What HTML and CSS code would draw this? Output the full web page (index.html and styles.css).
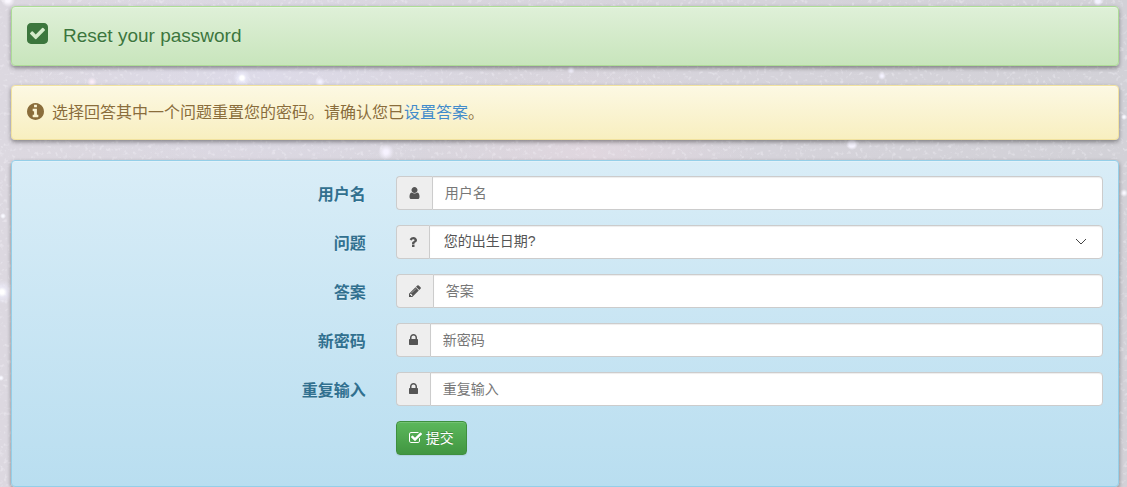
FILE: index.html
```html
<!DOCTYPE html>
<html lang="zh-CN">
<head>
    <meta charset="UTF-8">
    <meta name="viewport" content="width=device-width, initial-scale=1.0">
    <title>Reset your password</title>
    <link rel="stylesheet" href="styles.css">
</head>
<body>
    <div class="alert alert-success">
        <svg class="icon-title" viewBox="128 128 1536 1536" aria-hidden="true"><path d="M813 1299l614-614q19-19 19-45t-19-45l-102-102q-19-19-45-19t-45 19l-467 467-211-211q-19-19-45-19t-45 19l-102 102q-19 19-19 45t19 45l358 358q19 19 45 19t45-19zm851-883v960q0 119-84.5 203.5t-203.5 84.5h-960q-119 0-203.5-84.5t-84.5-203.5v-960q0-119 84.5-203.5t203.5-84.5h960q119 0 203.5 84.5t84.5 203.5z"/></svg>
        <h1>Reset your password</h1>
    </div>

    <div class="alert alert-warning">
        <svg class="icon-info" viewBox="128 128 1536 1536" aria-hidden="true"><path d="M1152 1376v-160q0-14-9-23t-23-9h-96v-512q0-14-9-23t-23-9h-320q-14 0-23 9t-9 23v160q0 14 9 23t23 9h96v320h-96q-14 0-23 9t-9 23v160q0 14 9 23t23 9h448q14 0 23-9t9-23zm-128-896v-160q0-14-9-23t-23-9h-192q-14 0-23 9t-9 23v160q0 14 9 23t23 9h192q14 0 23-9t9-23zm640 416q0 209-103 385.5t-279.5 279.5-385.5 103-385.5-103-279.5-279.5-103-385.5 103-385.5 279.5-279.5 385.5-103 385.5 103 279.5 279.5 103 385.5z"/></svg>
        <p>选择回答其中一个问题重置您的密码。请确认您已<a href="#">设置答案</a>。</p>
    </div>

    <form class="alert alert-info">
        <div class="form-group">
            <label for="username">用户名</label>
            <div class="input-group">
                <span class="addon"><svg class="icon-user" viewBox="192 0 1408 1792" aria-hidden="true"><path d="M1536 1399q0 109-62.5 187t-150.5 78h-854q-88 0-150.5-78t-62.5-187q0-85 8.5-160.5t31.5-152 58.5-131 94-89 134.5-34.5q131 128 313 128t313-128q76 0 134.5 34.5t94 89 58.5 131 31.5 152 8.5 160.5zm-256-887q0 159-112.5 271.5t-271.5 112.5-271.5-112.5-112.5-271.5 112.5-271.5 271.5-112.5 271.5 112.5 112.5 271.5z"/></svg></span>
                <input type="text" id="username" name="username" placeholder="用户名">
            </div>
        </div>
        <div class="form-group">
            <label for="question">问题</label>
            <div class="input-group">
                <span class="addon"><svg class="icon-question" viewBox="384 0 1024 1792" aria-hidden="true"><path d="M1088 1256v240q0 16-12 28t-28 12h-240q-16 0-28-12t-12-28v-240q0-16 12-28t28-12h240q16 0 28 12t12 28zm316-600q0 54-15.5 101t-35 76.5-55 59.5-57.5 43.5-61 35.5q-41 23-68.5 65t-27.5 67q0 17-12 32.5t-28 15.5h-240q-15 0-25.5-18.5t-10.5-37.5v-45q0-83 65-156.5t143-108.5q59-27 84-56t25-76q0-42-46.5-74t-107.5-32q-65 0-108 29-35 25-107 115-13 16-31 16-12 0-25-8l-164-125q-13-10-15.5-25t5.5-28q160-266 464-266 80 0 161 31t146 83 106 127.5 41 158.5z"/></svg></span>
                <select id="question" name="question">
                    <option>您的出生日期?</option>
                </select>
            </div>
        </div>
        <div class="form-group">
            <label for="answer">答案</label>
            <div class="input-group">
                <span class="addon"><svg class="icon-pencil" viewBox="128 0 1536 1792" aria-hidden="true"><path d="M491 1536l91-91-235-235-91 91v107h128v128h107zm523-928q0-22-22-22-10 0-17 7l-542 542q-7 7-7 17 0 22 22 22 10 0 17-7l542-542q7-7 7-17zm-54-192l416 416-832 832h-416v-416zm683 96q0 53-37 90l-166 166-416-416 166-165q36-38 90-38 53 0 91 38l235 234q37 39 37 91z"/></svg></span>
                <input type="text" id="answer" name="answer" placeholder="答案">
            </div>
        </div>
        <div class="form-group">
            <label for="password">新密码</label>
            <div class="input-group">
                <span class="addon"><svg class="icon-lock" viewBox="320 0 1152 1792" aria-hidden="true"><path d="M640 768h512v-192q0-106-75-181t-181-75-181 75-75 181v192zm832 96v576q0 40-28 68t-68 28h-960q-40 0-68-28t-28-68v-576q0-40 28-68t68-28h32v-192q0-184 132-316t316-132 316 132 132 316v192h32q40 0 68 28t28 68z"/></svg></span>
                <input type="password" id="password" name="password" placeholder="新密码">
            </div>
        </div>
        <div class="form-group">
            <label for="repeat">重复输入</label>
            <div class="input-group">
                <span class="addon"><svg class="icon-lock" viewBox="320 0 1152 1792" aria-hidden="true"><path d="M640 768h512v-192q0-106-75-181t-181-75-181 75-75 181v192zm832 96v576q0 40-28 68t-68 28h-960q-40 0-68-28t-28-68v-576q0-40 28-68t68-28h32v-192q0-184 132-316t316-132 316 132 132 316v192h32q40 0 68 28t28 68z"/></svg></span>
                <input type="password" id="repeat" name="repeat" placeholder="重复输入">
            </div>
        </div>
        <div class="form-group">
            <div class="form-actions">
                <button type="submit" class="btn-submit">
                    <svg class="icon-submit" viewBox="64 0 1664 1792" aria-hidden="true"><path d="M1472 930v318q0 119-84.5 203.5t-203.5 84.5h-832q-119 0-203.5-84.5t-84.5-203.5v-832q0-119 84.5-203.5t203.5-84.5h832q63 0 117 25 15 7 18 23 3 17-9 29l-49 49q-10 10-23 10-3 0-9-2-23-6-45-6h-832q-66 0-113 47t-47 113v832q0 66 47 113t113 47h832q66 0 113-47t47-113v-254q0-13 9-22l64-64q10-10 23-10 6 0 12 4 20 8 20 29zm231-489l-814 814q-24 24-57 24t-57-24l-430-430q-24-24-24-57t24-57l110-110q24-24 57-24t57 24l263 263 647-647q24-24 57-24t57 24l110 110q24 24 24 57t-24 57z"/></svg>
                    提交
                </button>
            </div>
        </div>
    </form>
</body>
</html>
```
FILE: styles.css
```css
* {
    box-sizing: border-box;
}
body {
    margin: 0;
    padding: 6px 8px 0 11px;
    font-family: "Liberation Sans", "Noto Sans CJK SC", sans-serif;
    font-size: 16px;
    line-height: 23px;
    background-color: #d6d3dc;
    /* bright stars, then faint star dust, then the soft nebula colours */
    background-image:
        radial-gradient(circle at 242px 78px, #fff 2px, rgba(240, 240, 255, 0.6) 4px, transparent 9px),
        radial-gradient(circle at 92px 82px, #fbeef8 1px, transparent 5px),
        radial-gradient(circle at 386px 152px, #f6f2ff 2px, transparent 8px),
        radial-gradient(circle at 320px 82px, #f4f2ff 1px, transparent 5px),
        radial-gradient(circle at 571px 70px, #f4f2ff 1px, transparent 4px),
        radial-gradient(circle at 852px 144px, #f6f4ff 3px, transparent 6px),
        radial-gradient(circle at 882px 76px, #f4f2ff 1px, transparent 4px),
        radial-gradient(circle at 1098px 1px, #f4f2ff 2px, transparent 5px),
        radial-gradient(circle at 1124px 193px, #f8f8ff 1px, transparent 4px),
        radial-gradient(circle at 1124px 117px, #f8f8ff 1px, transparent 3px),
        radial-gradient(circle at 8px 0, #fbf8ff 2px, transparent 7px),
        radial-gradient(circle at 2px 292px, #fff 2px, rgba(240, 240, 255, 0.6) 5px, transparent 12px),
        radial-gradient(circle at 3px 216px, #f8f8ff 1px, transparent 3px),
        radial-gradient(circle at 1px 378px, #f8f8ff 1px, transparent 3px),
        url("data:image/svg+xml,%3Csvg xmlns='http://www.w3.org/2000/svg' width='400' height='300'%3E%3Cfilter id='s' x='0' y='0' width='100%25' height='100%25'%3E%3CfeTurbulence type='fractalNoise' baseFrequency='.25' numOctaves='3' seed='8' stitchTiles='stitch'/%3E%3CfeColorMatrix values='0 0 0 0 .96 0 0 0 0 .95 0 0 0 0 1 5 0 0 0 -2.9'/%3E%3C/filter%3E%3Crect width='400' height='300' filter='url(%23s)' opacity='.3'/%3E%3C/svg%3E"),
        radial-gradient(ellipse at 590px 155px, rgba(228, 216, 224, 0.7), transparent 170px),
        radial-gradient(ellipse at 260px 75px, rgba(222, 220, 236, 0.7), transparent 240px),
        linear-gradient(90deg, #dcd8e0, #d7d4dc 50%, #d2d1d7);
}
h1,
p {
    margin: 0;
    font-weight: normal;
}
h1 {
    font-size: 19px;
    line-height: 28px;
}
a {
    color: #428bca;
    text-decoration: none;
}
svg {
    display: block;
    flex: none;
    fill: currentColor;
}
.alert {
    padding: 15px;
    margin-bottom: 20px;
    border: 1px solid;
    border-radius: 4px;
    text-shadow: 0 1px 0 rgba(255, 255, 255, 0.2);
    box-shadow: inset 0 1px 0 rgba(255, 255, 255, 0.25), 0 2px 4px rgba(0, 0, 0, 0.4);
}
.alert-success {
    display: flex;
    gap: 15px;
    margin-bottom: 19px;
    color: #3c763d;
    border-color: #addc97;
    background-image: linear-gradient(#dff0d8, #c8e5bc);
}
.alert-warning {
    display: flex;
    gap: 8px;
    color: #8a6d3b;
    border-color: #f1e29f;
    background-image: linear-gradient(#fcf8e3, #f8efc0);
}
.alert-info {
    padding-bottom: 16px;
    margin-bottom: 0;
    color: #31708f;
    border-color: #95cfe8;
    background-image: linear-gradient(#d9edf7, #b9def0);
}
.icon-title {
    width: 21px;
    height: 21px;
    margin-top: 1px;
}
.icon-info {
    width: 17px;
    height: 17px;
    margin-top: 2px;
}
.form-group {
    display: grid;
    grid-template-columns: 4fr 8fr;
    margin: 0 -15px 15px;
}
.form-group label {
    padding: 7px 15px 0;
    font-weight: bold;
    text-align: right;
}
.input-group {
    display: flex;
    margin: 0 15px;
}
.addon {
    display: flex;
    align-items: center;
    padding: 0 12px;
    color: #555;
    background-color: #eee;
    border: 1px solid #ccc;
    border-right: 0;
    border-radius: 4px 0 0 4px;
}
.addon svg {
    height: 14px;
}
.icon-user {
    width: 11px;
}
.icon-question {
    width: 8px;
}
.icon-pencil {
    width: 12px;
}
.icon-lock {
    width: 9px;
}
.input-group input,
.input-group select {
    flex: 1;
    min-width: 0;
    height: 34px;
    padding: 6px 12px;
    font-family: inherit;
    font-size: 14px;
    line-height: 20px;
    color: #555;
    background-color: #fff;
    border: 1px solid #ccc;
    border-radius: 0 4px 4px 0;
    box-shadow: inset 0 1px 1px rgba(0, 0, 0, 0.075);
}
.input-group input::placeholder {
    color: #777;
}
.input-group select {
    appearance: none;
    padding: 5px 14px 7px;
    background-image: url("data:image/svg+xml,%3Csvg xmlns='http://www.w3.org/2000/svg' width='12' height='8'%3E%3Cpath d='M1 1l5 5 5-5' fill='none' stroke='%23444'/%3E%3C/svg%3E");
    background-repeat: no-repeat;
    background-position: right 15px center;
}
.form-actions {
    grid-column: 2;
    padding: 0 15px;
}
.btn-submit {
    display: flex;
    align-items: center;
    gap: 4px;
    height: 34px;
    padding: 0 12px;
    font-family: inherit;
    font-size: 14px;
    line-height: 20px;
    color: #fff;
    text-shadow: 0 -1px 0 rgba(0, 0, 0, 0.2);
    background-image: linear-gradient(#5cb85c, #419641);
    border: 1px solid #3e8f3e;
    border-radius: 4px;
    box-shadow: inset 0 1px 0 rgba(255, 255, 255, 0.15), 0 1px 1px rgba(0, 0, 0, 0.075);
    cursor: pointer;
}
.icon-submit {
    width: 13px;
    height: 14px;
}
```
